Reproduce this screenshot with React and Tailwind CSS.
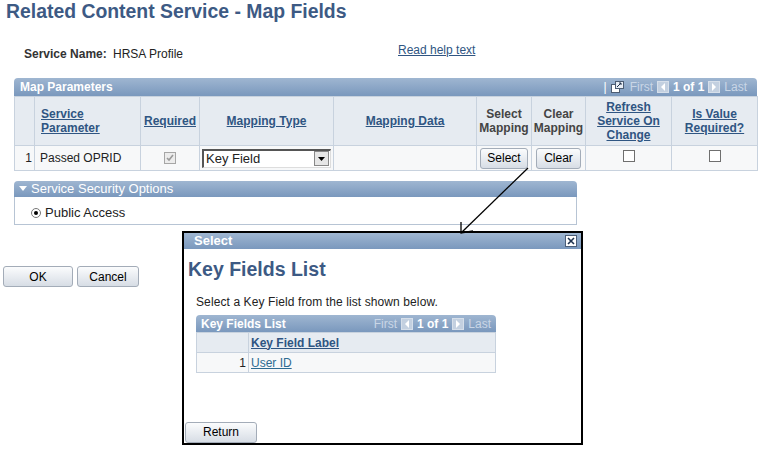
function PagerArrow({ dir }) {
    return (
        <span className="inline-flex w-[12px] h-[12px] items-center justify-center bg-[#c3d0e0] border border-[#d6dfea]">
            <svg width="6" height="8" viewBox="0 0 6 8">
                {dir === 'left' ? <polygon points="5,0 5,8 1,4" fill="#ffffff" /> : <polygon points="1,0 1,8 5,4" fill="#ffffff" />}
            </svg>
        </span>
    );
}

function Pager({ zoom }) {
    return (
        <div className="flex items-center gap-[4px] text-[12px]">
            {zoom && (
                <>
                    <span className="text-white">|</span>
                    <svg width="13" height="12" viewBox="0 0 13 12" className="mr-[2px]">
                        <rect x="0.5" y="3.5" width="8" height="8" fill="#ffffff" stroke="#4d5d73" />
                        <rect x="4.5" y="0.5" width="8" height="7" fill="#e9eef5" stroke="#4d5d73" />
                        <path d="M6 6 L10 2 M8 2 H10 V4" stroke="#20324d" strokeWidth="1" fill="none" />
                    </svg>
                </>
            )}
            <span className="text-[#c9d6e6]">First</span>
            <PagerArrow dir="left" />
            <span className="text-white font-bold">1 of 1</span>
            <PagerArrow dir="right" />
            <span className="text-[#c9d6e6]">Last</span>
        </div>
    );
}

function Btn({ children, className = '' }) {
    return (
        <button className={`h-[21px] rounded-[3px] border border-[#a3acb8] bg-gradient-to-b from-[#fbfcfd] to-[#d7dde5] text-[12px] text-black leading-none ${className}`}>
            {children}
        </button>
    );
}

function CheckBox({ checked, disabled }) {
    return (
        <span className={`inline-flex w-[12px] h-[12px] items-center justify-center border ${disabled ? 'border-[#a6a6a6] bg-[#ececec]' : 'border-[#6f6f6f] bg-white'}`}>
            {checked && (
                <svg width="8" height="8" viewBox="0 0 8 8">
                    <path d="M1 4 L3 6 L7 1" stroke="#9a9a9a" strokeWidth="1.6" fill="none" />
                </svg>
            )}
        </span>
    );
}

const headLink = 'text-[#2f5582] underline font-bold';

export default function App() {
    return (
        <div className="relative w-[764px] h-[461px] bg-white overflow-hidden text-[#222]" style={{ fontFamily: '"Liberation Sans", Arial, sans-serif' }}>
            <h1 className="pl-[6px] pt-[1px] h-[22px] text-[19.4px] leading-[20px] font-bold text-[#3d5a84]">
                Related Content Service - Map Fields
            </h1>

            <div className="relative h-[20px] mt-[22px] text-[12px]">
                <span className="absolute left-[24px] top-[1px] font-bold text-[#333]">Service Name:</span>
                <span className="absolute left-[113px] top-[1px]">HRSA Profile</span>
                <a className="absolute left-[398px] top-[-3px] text-[#2f5582] underline">Read help text</a>
            </div>

            {/* Map Parameters grid */}
            <div className="ml-[14px] mt-[14px] w-[743px]">
                <div className="flex items-center justify-between h-[18px] rounded-t-[4px] bg-gradient-to-b from-[#9fb6d1] to-[#7a98bd] pl-[6px] pr-[10px]">
                    <span className="text-white font-bold text-[12px]">Map Parameters</span>
                    <Pager zoom />
                </div>
                <table className="w-full table-fixed border-collapse text-[12px]">
                    <colgroup>
                        <col className="w-[20px]" />
                        <col className="w-[106px]" />
                        <col className="w-[59px]" />
                        <col className="w-[134px]" />
                        <col className="w-[143px]" />
                        <col className="w-[55px]" />
                        <col className="w-[54px]" />
                        <col className="w-[86px]" />
                        <col className="w-[86px]" />
                    </colgroup>
                    <thead>
                        <tr className="h-[49px] bg-[#e6ebf1] leading-[14px]">
                            <th className="border border-[#c8d2de]"></th>
                            <th className="border border-[#c8d2de] text-left pl-[6px]"><span className={headLink}>Service<br />Parameter</span></th>
                            <th className="border border-[#c8d2de]"><span className={headLink}>Required</span></th>
                            <th className="border border-[#c8d2de]"><span className={headLink}>Mapping Type</span></th>
                            <th className="border border-[#c8d2de]"><span className={headLink}>Mapping Data</span></th>
                            <th className="border border-[#c8d2de] font-bold text-[#444]">Select<br />Mapping</th>
                            <th className="border border-[#c8d2de] font-bold text-[#444]">Clear<br />Mapping</th>
                            <th className="border border-[#c8d2de]"><span className={headLink}>Refresh<br />Service On<br />Change</span></th>
                            <th className="border border-[#c8d2de]"><span className={headLink}>Is Value<br />Required?</span></th>
                        </tr>
                    </thead>
                    <tbody>
                        <tr className="h-[25px] bg-[#f7f8f9]">
                            <td className="border border-[#c8d2de] text-right pr-[2px]">1</td>
                            <td className="border border-[#c8d2de] pl-[5px]">Passed OPRID</td>
                            <td className="border border-[#c8d2de] text-center"><CheckBox checked disabled /></td>
                            <td className="border border-[#c8d2de] px-[2px]">
                                <div className="flex items-center h-[19px] w-[129px] border-t-2 border-l-2 border-t-[#555] border-l-[#555] border-b border-r border-b-[#ddd] border-r-[#ddd] bg-white">
                                    <span className="flex-1 pl-[2px] text-[13px]">Key Field</span>
                                    <span className="flex items-center justify-center w-[15px] h-[15px] mr-[1px] bg-[#e6e6e6] border border-[#888]">
                                        <svg width="7" height="4" viewBox="0 0 7 4"><polygon points="0,0 7,0 3.5,4" fill="#000" /></svg>
                                    </span>
                                </div>
                            </td>
                            <td className="border border-[#c8d2de]"></td>
                            <td className="border border-[#c8d2de] text-center"><Btn className="w-[48px]">Select</Btn></td>
                            <td className="border border-[#c8d2de] text-center"><Btn className="w-[45px]">Clear</Btn></td>
                            <td className="border border-[#c8d2de] text-center"><CheckBox /></td>
                            <td className="border border-[#c8d2de] text-center"><CheckBox /></td>
                        </tr>
                    </tbody>
                </table>
            </div>

            {/* Service Security Options */}
            <div className="ml-[14px] mt-[10px] w-[563px]">
                <div className="flex items-center h-[16px] rounded-t-[4px] bg-gradient-to-b from-[#9fb6d1] to-[#7a98bd] pl-[5px]">
                    <svg width="8" height="6" viewBox="0 0 8 6" className="mr-[4px]"><polygon points="0,0 8,0 4,5" fill="#ffffff" /></svg>
                    <span className="text-white text-[13px]">Service Security Options</span>
                </div>
                <div className="h-[28px] border border-t-0 border-[#b7c4d4] flex items-center pl-[16px] pt-[4px] text-[13px]">
                    <span className="inline-flex w-[10px] h-[10px] rounded-full border border-[#777] bg-white items-center justify-center mr-[4px]">
                        <span className="w-[4px] h-[4px] rounded-full bg-black" />
                    </span>
                    Public Access
                </div>
            </div>

            <div className="flex gap-[4px] ml-[3px] mt-[41px]">
                <Btn className="w-[70px]">OK</Btn>
                <Btn className="w-[62px]">Cancel</Btn>
            </div>

            {/* Select modal */}
            <div className="absolute left-[182px] top-[231px] w-[401px] h-[214px] border-2 border-black bg-white flex flex-col">
                <div className="flex items-center justify-between h-[16px] bg-gradient-to-b from-[#9fb6d1] to-[#7a98bd] pl-[10px] pr-[4px]">
                    <span className="text-white font-bold text-[13px]">Select</span>
                    <span className="flex items-center justify-center w-[12px] h-[12px] bg-white border border-[#4b5e78]">
                        <svg width="8" height="8" viewBox="0 0 8 8"><path d="M1 1 L7 7 M7 1 L1 7" stroke="#1f3350" strokeWidth="1.6" /></svg>
                    </span>
                </div>
                <h2 className="pl-[4px] mt-[10px] text-[19.5px] leading-[20px] font-bold text-[#3d5a84]">Key Fields List</h2>
                <p className="pl-[12px] mt-[14px] text-[12px] tracking-[0.1px] text-[#222]">Select a Key Field from the list shown below.</p>
                <div className="ml-[12px] mt-[4px] w-[300px]">
                    <div className="flex items-center justify-between h-[17px] rounded-t-[4px] bg-gradient-to-b from-[#9fb6d1] to-[#7a98bd] pl-[5px] pr-[5px]">
                        <span className="text-white font-bold text-[12px]">Key Fields List</span>
                        <Pager />
                    </div>
                    <table className="w-full table-fixed border-collapse text-[12px]">
                        <colgroup>
                            <col className="w-[52px]" />
                            <col />
                        </colgroup>
                        <tbody>
                            <tr className="h-[20px] bg-[#e6ebf1]">
                                <td className="border border-[#c8d2de]"></td>
                                <td className="border border-[#c8d2de] pl-[2px]"><span className={headLink}>Key Field Label</span></td>
                            </tr>
                            <tr className="h-[20px] bg-[#f7f8f9]">
                                <td className="border border-[#c8d2de] text-right pr-[2px]">1</td>
                                <td className="border border-[#c8d2de] pl-[2px]"><a className="text-[#2d6b92] underline">User ID</a></td>
                            </tr>
                        </tbody>
                    </table>
                </div>
                <div className="mt-auto ml-[1px]">
                    <Btn className="w-[72px]">Return</Btn>
                </div>
            </div>

            {/* hand-drawn arrow */}
            <svg className="absolute left-0 top-0 pointer-events-none" width="764" height="461">
                <path d="M528 168 L461 233" stroke="#000" strokeWidth="1.3" fill="none" />
                <path d="M461 222 L461 233 L473 231" stroke="#000" strokeWidth="1.3" fill="none" />
            </svg>
        </div>
    );
}
